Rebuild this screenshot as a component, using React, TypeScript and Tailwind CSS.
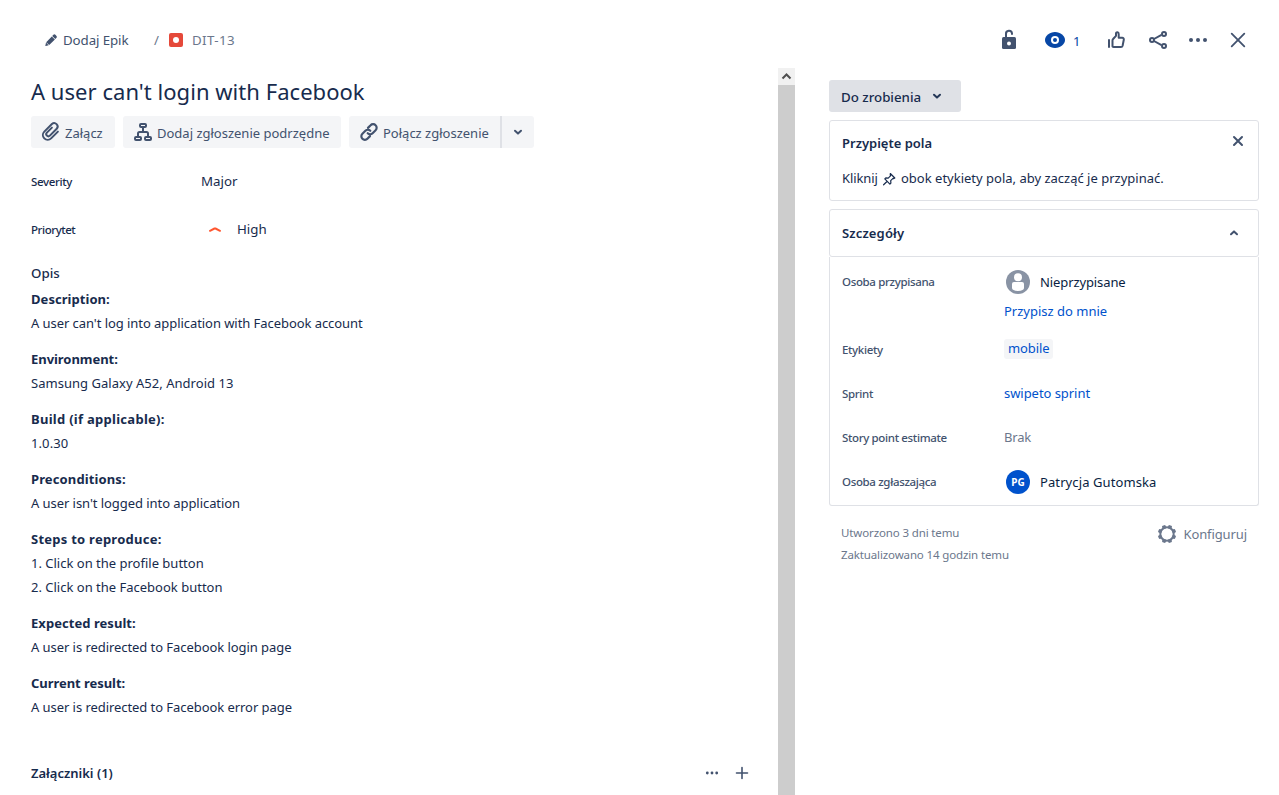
import React from "react";

function Chevron({ className }: { className: string }) {
  return (
    <svg viewBox="0 0 16 16" fill="none" stroke="currentColor" strokeWidth="2" strokeLinecap="round" strokeLinejoin="round" className={className}>
      <path d="M5 6.8l3 2.8 3-2.8" />
    </svg>
  );
}

function Header() {
  return (
    <header className="flex h-[68px] shrink-0 items-start justify-between pl-[44px] pr-[29px] text-[#42526e]">
      <div className="flex h-6 items-center mt-[29px] text-[13.3px]">
        <svg viewBox="0 0 14 14" className="h-[14px] w-[14px] -mt-[2px]" fill="currentColor">
          <path d="M1.300 13l.7-3.500 2.700 2.700-2.900.9zM2.200 9.200l5.600-5.800 3.100 3.100-5.700 5.500zM8.200 2.900l1.200-1.200a1.400 1.400 0 0 1 2 0l1.100 1.200a1.400 1.400 0 0 1 0 1.900l-1.200 1.200z" />
        </svg>
        <span className="ml-[5px] w-[91px] tracking-[-0.1px]">Dodaj Epik</span>
        <span className="w-[14px] text-[#6b778c]">/</span>
        <svg viewBox="0 0 14 14" className="h-[14px] w-[14px] ml-[1px] -mt-[2px]">
          <rect width="14" height="14" rx="2" fill="#e5493a" />
          <circle cx="7" cy="7" r="3" fill="#fff" />
        </svg>
        <span className="ml-[9px] tracking-[0.4px] text-[#6b778c]">DIT-13</span>
      </div>
      <div className="flex h-6 items-center mt-[28px]">
        <svg viewBox="0 0 24 24" className="h-6 w-6" fill="none" stroke="currentColor" strokeWidth="2">
          <rect x="5" y="9" width="14" height="12" rx="1.5" fill="currentColor" stroke="none" />
          <path d="M9 10V6a3 3 0 0 1 6-.5V6" strokeLinecap="round" />
          <circle cx="12" cy="15.500" r="2" fill="#fff" stroke="none" />
        </svg>
        <svg viewBox="0 0 24 24" className="ml-[22px] h-6 w-6 text-[#0747a6]" fill="currentColor">
          <path d="M12 4C6.500 4 2 8 2 12s4.500 8 10 8 10-4 10-8-4.500-8-10-8z" />
          <circle cx="12" cy="12" r="4" fill="#fff" />
          <circle cx="12" cy="12" r="2" />
        </svg>
        <span className="ml-[6px] w-[31px] text-[13px] leading-6 text-[#0747a6] pt-[2px]">1</span>
        <svg viewBox="0 0 24 24" className="h-6 w-6" fill="none" stroke="currentColor" strokeWidth="2" strokeLinecap="round" strokeLinejoin="round">
          <path d="M5 12v7M8.500 18.600v-6.200c0-.6.2-1 .6-1.400l2.900-3.200V5.600c0-2 2.700-1.700 2.700.3v3.900h3.600c1 0 1.700.9 1.500 1.900l-1.200 6c-.2.800-.8 1.300-1.600 1.300h-7.500c-.6 0-1-.2-1-.4z" />
        </svg>
        <svg viewBox="0 0 24 24" className="ml-[18px] h-6 w-6" fill="none" stroke="currentColor" strokeWidth="2">
          <path d="M8 11l7.500-4.200M8 13l7.500 4.200" />
          <circle cx="6" cy="12" r="2" /><circle cx="18" cy="6" r="2" /><circle cx="18" cy="18" r="2" />
        </svg>
        <svg viewBox="0 0 24 24" className="ml-[16px] h-6 w-6" fill="currentColor">
          <circle cx="5" cy="12" r="2" /><circle cx="12" cy="12" r="2" /><circle cx="19" cy="12" r="2" />
        </svg>
        <svg viewBox="0 0 24 24" className="ml-[16px] h-6 w-6" fill="none" stroke="currentColor" strokeWidth="1.800" strokeLinecap="round">
          <path d="M5.700 5.700l12.600 12.600M18.300 5.700L5.700 18.300" />
        </svg>
      </div>
    </header>
  );
}

function Toolbar() {
  return (
    <div className="mt-[12px] flex h-8 text-[13px] text-[#42526e]">
      <button className="flex w-[84px] items-center rounded-[3px] bg-[#f4f5f7] pl-2">
        <svg viewBox="0 0 24 24" className="h-6 w-6" fill="none" stroke="currentColor" strokeWidth="2" strokeLinecap="round">
          <path d="M12.900 7.600l-5 5a2.100 2.100 0 0 0 3 3l6.800-6.800a3.400 3.400 0 0 0-4.800-4.800L5.300 11.600a4.800 4.800 0 0 0 6.800 6.800l6.800-6.800" />
        </svg>
        <span className="ml-[2px] pt-[3px]">Załącz</span>
      </button>
      <button className="ml-2 flex w-[218px] items-center rounded-[3px] bg-[#f4f5f7] pl-2">
        <svg viewBox="0 0 24 24" className="h-6 w-6" fill="none" stroke="currentColor" strokeWidth="2">
          <rect x="9" y="4" width="6" height="3" rx="1" />
          <rect x="4" y="17" width="6" height="3" rx="1" />
          <rect x="14" y="17" width="6" height="3" rx="1" />
          <path d="M12 7v4.500M7 17v-3.500q0-1.500 1.500-1.500h7q1.500 0 1.500 1.500V17" />
        </svg>
        <span className="ml-[2px] pt-[3px] whitespace-nowrap">Dodaj zgłoszenie podrzędne</span>
      </button>
      <button className="ml-2 flex w-[151px] items-center rounded-l-[3px] bg-[#f4f5f7] pl-2">
        <svg viewBox="0 0 24 24" className="h-6 w-6" fill="none" stroke="currentColor" strokeWidth="2.200" strokeLinecap="round">
          <path d="M11 7.900l2.600-2.600a3.400 3.400 0 0 1 5 0 3.400 3.400 0 0 1 0 4.900l-3 3a3.400 3.400 0 0 1-4.900 0M13 16.100l-2.600 2.600a3.400 3.400 0 0 1-5 0 3.400 3.400 0 0 1 0-4.900l3-3a3.400 3.400 0 0 1 4.900 0" />
        </svg>
        <span className="ml-[2px] pt-[3px] whitespace-nowrap">Połącz zgłoszenie</span>
      </button>
      <button className="flex w-[34px] items-center justify-center rounded-r-[3px] border-l-2 border-[#dfe1e6] bg-[#f4f5f7]">
        <Chevron className="h-4 w-4" />
      </button>
    </div>
  );
}

interface SectionProps {
  title: string;
  lines: string[];
  titleClass?: string;
  lineClass?: string;
}

function Section({ title, lines, titleClass = "tracking-[0.05px]", lineClass = "tracking-[-0.06px]" }: SectionProps) {
  return (
    <section className="mb-3 text-[13px] leading-6">
      <h3 className={"font-bold " + titleClass}>{title}</h3>
      {lines.map((l) => <p key={l} className={lineClass}>{l}</p>)}
    </section>
  );
}

function Main() {
  return (
    <main className="flex w-[778px] flex-col pl-[31px]">
      <h1 className="mt-[8px] h-[28px] text-[22px] leading-[31px] tracking-[0.04px]">A user can't login with Facebook</h1>
      <Toolbar />
      <div className="mt-[22px] flex h-6 items-center">
        <span className="w-[170px] text-[11.500px] font-medium tracking-[-0.35px]">Severity</span>
        <span className="-mt-px text-[13.3px]">Major</span>
      </div>
      <div className="mt-6 flex h-6 items-center">
        <span className="w-[170px] text-[11.500px] font-medium tracking-[-0.45px]">Priorytet</span>
        <svg viewBox="0 0 16 16" className="ml-[6px] h-4 w-4" fill="none" stroke="#ff5630" strokeWidth="2" strokeLinecap="round" strokeLinejoin="round">
          <path d="M3 8.800l4.500-2.300q.5-.2 1 0L13 8.800" />
        </svg>
        <span className="-mt-px ml-[14px] text-[13.3px]">High</span>
      </div>
      <h2 className="mt-[19px] h-[26px] text-[13.3px] leading-6 font-medium">Opis</h2>
      <div className="h-[474px] shrink-0">
        <Section title="Description:" lines={["A user can't log into application with Facebook account"]} />
        <Section title="Environment:" lines={["Samsung Galaxy A52, Android 13"]} titleClass="tracking-[-0.05px]" lineClass="tracking-[0.03px]" />
        <Section title="Build (if applicable):" lines={["1.0.30"]} titleClass="tracking-[0.28px]" lineClass="tracking-[0.1px]" />
        <Section title="Preconditions:" lines={["A user isn't logged into application"]} titleClass="tracking-[0.12px]" />
        <Section title="Steps to reproduce:" lines={["1. Click on the profile button", "2. Click on the Facebook button"]} titleClass="tracking-[0.25px]" lineClass="tracking-normal" />
        <Section title="Expected result:" lines={["A user is redirected to Facebook login page"]} />
        <Section title="Current result:" lines={["A user is redirected to Facebook error page"]} titleClass="tracking-[-0.05px]" />
      </div>
      <div className="flex h-6 shrink-0 items-center text-[#42526e]">
        <h2 className="mt-px grow text-[13px] font-semibold text-[#172b4d]">Załączniki (1)</h2>
        <svg viewBox="0 0 16 16" className="mr-[14px] h-4 w-4" fill="currentColor">
          <circle cx="3.300" cy="8" r="1.400" /><circle cx="8" cy="8" r="1.400" /><circle cx="12.700" cy="8" r="1.400" />
        </svg>
        <svg viewBox="0 0 16 16" className="mr-[28px] h-4 w-4" fill="none" stroke="currentColor" strokeWidth="1.600" strokeLinecap="round">
          <path d="M8 2.500v11M2.500 8h11" />
        </svg>
      </div>
    </main>
  );
}

function Row({ label, className, children }: { label: string; className: string; children: React.ReactNode }) {
  return (
    <div className={"flex items-center " + className}>
      <span className="w-[162px] shrink-0 text-[11.500px] font-medium tracking-[-0.35px] text-[#42526e]">{label}</span>
      {children}
    </div>
  );
}

const TEETH = [22.5, 67.5, 112.5, 157.5, 202.5, 247.5, 292.5, 337.5];

function Details() {
  return (
    <aside className="flex w-[430px] flex-col pt-3">
      <button className="flex h-8 w-[132px] items-center rounded-[3px] bg-[#dfe1e6] pl-3 text-left text-[13.3px] font-medium">
        <span className="w-[87px] pt-[3px] whitespace-nowrap">Do zrobienia</span>
        <Chevron className="ml-[1px] h-4 w-4 text-[#253858]" />
      </button>
      <section className="mt-2 h-[81px] rounded-[3px] border border-[#dfe1e6] px-3 text-[13px]">
        <div className="mt-[10px] flex h-6 items-center justify-between">
          <h2 className="mt-px font-semibold text-[13px]">Przypięte pola</h2>
          <svg viewBox="0 0 16 16" className="h-4 w-4 -mt-1 text-[#42526e]" fill="none" stroke="currentColor" strokeWidth="2" strokeLinecap="round"><path d="M4 4l8 8M12 4l-8 8" /></svg>
        </div>
        <p className="mt-[11px] flex h-6 items-center whitespace-nowrap">
          <span className="mt-px w-[39px] tracking-[-0.1px]">Kliknij</span>
          <svg viewBox="0 0 16 16" className="mt-px h-4 w-4" fill="none" stroke="currentColor" strokeWidth="1.200" strokeLinejoin="round" strokeLinecap="round">
            <path d="M9.300 2.500l4.500 4.500-.9.600-.9-.2-2.300 2.300.2 2.400-1 1L3.800 7.900l1-1 2.400.2 2.300-2.300-.2-1zM6 10.500l-3.400 3.300" />
          </svg>
          <span className="mt-px ml-[4px]">obok etykiety pola, aby zacząć je przypinać.</span>
        </p>
      </section>
      <section className="mt-2 h-[297px]">
        <div className="flex h-12 items-center justify-between rounded-[3px] border border-[#dfe1e6] pl-3 pr-4">
          <h2 className="mt-px text-[13px] font-semibold tracking-[0.15px]">Szczegóły</h2>
          <Chevron className="h-4 w-4 rotate-180 text-[#42526e]" />
        </div>
        <div className="h-[249px] rounded-b-[3px] border border-t-0 border-[#dfe1e6] pl-3 pt-[13px] text-[13px]">
          <Row label="Osoba przypisana" className="h-6">
            <svg viewBox="0 0 24 24" className="ml-[2px] h-6 w-6">
              <circle cx="12" cy="12" r="12" fill="#8993a4" />
              <circle cx="12" cy="7.200" r="4" fill="#fff" />
              <path d="M6 14a2 2 0 0 1 2-2h8a2 2 0 0 1 2 2v4q0 2.500-6 3-6-.5-6-3z" fill="#fff" />
            </svg>
            <span className="mt-px ml-[10px] tracking-[-0.1px] text-[#091e42]">Nieprzypisane</span>
          </Row>
          <a className="ml-[162px] mt-[5px] block h-6 leading-6 text-[#0052cc]">Przypisz do mnie</a>
          <Row label="Etykiety" className="mt-[15px] h-6">
            <span className="-mt-[2px] h-5 w-[49px] rounded-[3px] bg-[#f4f5f7] pl-1 leading-[19px] tracking-[-0.1px] text-[#0052cc]">mobile</span>
          </Row>
          <Row label="Sprint" className="mt-5 h-6"><span className="tracking-[-0.05px] text-[#0052cc]">swipeto sprint</span></Row>
          <Row label="Story point estimate" className="mt-5 h-6"><span className="tracking-[-0.2px] text-[#6b778c]">Brak</span></Row>
          <Row label="Osoba zgłaszająca" className="mt-5 h-6">
            <span className="ml-[2px] flex h-6 w-6 items-center justify-center rounded-full bg-[#0052cc] text-[10px] font-bold text-white">PG</span>
            <span className="mt-px ml-[10px] tracking-[0.1px] text-[#091e42]">Patrycja Gutomska</span>
          </Row>
        </div>
      </section>
      <footer className="mt-4 flex justify-between pl-3 pr-3 text-[#6b778c]">
        <div className="text-[11.500px] leading-[22px] tracking-[-0.13px]">
          <p>Utworzono 3 dni temu</p>
          <p>Zaktualizowano 14 godzin temu</p>
        </div>
        <div className="flex h-6 items-center text-[13px]">
          <svg viewBox="0 0 24 24" className="h-6 w-6" fill="currentColor">
            <circle cx="12" cy="12" r="6.700" fill="none" stroke="currentColor" strokeWidth="2" />
            {TEETH.map((a) => <rect key={a} x="10.100" y="2.800" width="3.800" height="3.500" rx="1" transform={`rotate(${a} 12 12)`} />)}
          </svg>
          <span className="mt-px ml-[4px] tracking-[-0.1px]">Konfiguruj</span>
        </div>
      </footer>
    </aside>
  );
}

export default function App() {
  return (
    <div className="flex h-[795px] w-[1279px] flex-col overflow-hidden bg-white font-['Noto_Sans',sans-serif] text-[#172b4d]">
      <Header />
      <div className="flex min-h-0 grow">
        <Main />
        <div className="mr-[34px] w-[17px] bg-[#cdcdcd]">
          <div className="flex h-[17px] items-center justify-center bg-[#f1f1f1]">
            <svg viewBox="0 0 17 17" className="h-[17px] w-[17px]" fill="none" stroke="#505050" strokeWidth="2"><path d="M4.500 10.500l4-4 4 4" /></svg>
          </div>
        </div>
        <Details />
      </div>
    </div>
  );
}
